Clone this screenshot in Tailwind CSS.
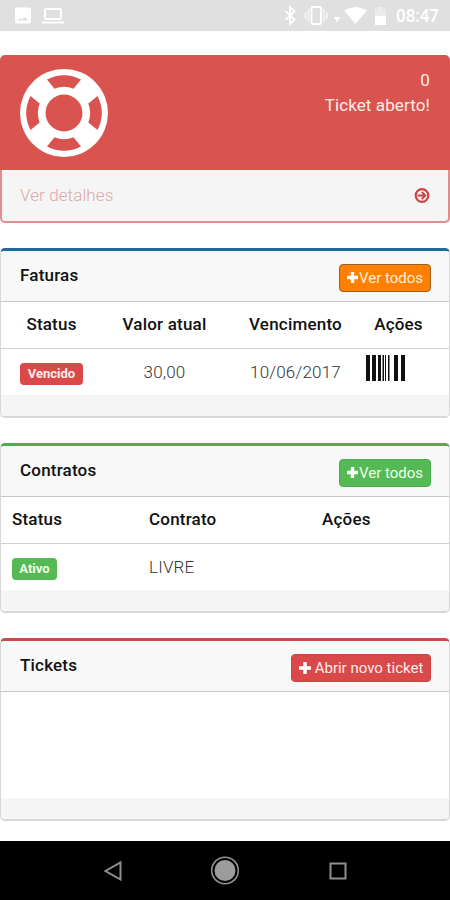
<!DOCTYPE html>
<html lang="pt-BR">
<head>
<meta charset="utf-8">
<title>Painel</title>
<script src="https://cdn.jsdelivr.net/npm/@tailwindcss/browser@4"></script>
</head>
<body class="w-[450px] h-[900px] overflow-hidden bg-white flex flex-col font-['Roboto',sans-serif] text-[17px] leading-[24px] tracking-[0.2px] text-[#111]">
<header class="h-[31px] shrink-0 bg-[#e0e0e0] flex items-center text-white">
  <svg class="w-[450px] h-[31px]" viewBox="0 0 450 31" fill="none">
    <rect x="15" y="7.500" width="16" height="16" rx="1.500" fill="#fff"/>
    <path d="M17.500 20.500l2.500-2.500 2 1.500 2.500-2.500 4 3.500z" fill="#e0e0e0"/>
    <rect x="45" y="9" width="16" height="10" rx="1" stroke="#fff" stroke-width="2"/>
    <path d="M42 22.500H64" stroke="#fff" stroke-width="2"/>
    <path d="M285.500 11l9 8.500-4.500 4.500V7l4.500 4.500-9 8.500" stroke="#fff" stroke-width="1.800"/>
    <rect x="311.500" y="7" width="9.500" height="17" rx="1" stroke="#fff" stroke-width="1.800"/>
    <path d="M308.500 9v13M305.500 12v7M324 9v13M327 12v7" stroke="#fff" stroke-opacity=".75" stroke-width="1.500"/>
    <path d="M334 17h6l-3 5z" fill="#fff"/>
    <path d="M344 10.500Q355 3.500 367 10.500L355.500 24z" fill="#fff"/>
    <path d="M375 9h3V7h5v2h3v7h-11z" fill="#fff" fill-opacity=".4"/>
    <rect x="375" y="16" width="11" height="9" fill="#fff"/>
    <text x="396" y="22" fill="#fff" font-size="17.500" font-weight="500" textLength="43" lengthAdjust="spacingAndGlyphs" letter-spacing="0">08:47</text>
  </svg>
</header>

<main class="flex flex-col pt-[24px] gap-[25px] grow">
  <section class="h-[168px]">
    <div class="h-[115px] rounded-t-[5px] bg-[#d9534f] flex justify-between px-[20px] pt-[14px] text-[#ffece8]">
      <svg class="w-[88px] h-[88px]" viewBox="-44 -44 88 88">
        <circle r="44" fill="#fff"/>
        <g fill="#d9534f">
          <path d="M-17-33.500A37.500 37.500 0 0 1 17-33.500L9.500-24.300A26 26 0 0 0-9.500-24.300Z"/>
          <path transform="rotate(90)" d="M-17-33.500A37.500 37.500 0 0 1 17-33.500L9.500-24.300A26 26 0 0 0-9.500-24.300Z"/>
          <path transform="rotate(180)" d="M-17-33.500A37.500 37.500 0 0 1 17-33.500L9.500-24.300A26 26 0 0 0-9.500-24.300Z"/>
          <path transform="rotate(270)" d="M-17-33.500A37.500 37.500 0 0 1 17-33.500L9.500-24.300A26 26 0 0 0-9.500-24.300Z"/>
          <circle r="18.500"/>
        </g>
      </svg>
      <div class="text-right leading-[25px] -mt-px tracking-[0.1px]"><div>0</div><div>Ticket aberto!</div></div>
    </div>
    <div class="h-[53px] bg-[#f5f5f5] rounded-b-[5px] border-2 border-t-0 border-[#dc8f8c] flex items-center justify-between px-[18px]">
      <span class="font-light text-[#dbaaa6] tracking-[0.1px] pb-px">Ver detalhes</span>
      <svg class="w-[16px] h-[16px]" viewBox="0 0 16 16" fill="none" stroke="#cb4643"><circle cx="8" cy="7.500" r="6.300" stroke-width="2.200"/><path d="M3.500 7.500H11M7.800 4L11.300 7.500l-3.500 3.500" stroke-width="2"/></svg>
    </div>
  </section>

  <section class="h-[170px] border border-b-2 border-[#d8d8d8] border-t-[3px] border-t-[#1c6c9c] rounded-[5px] overflow-hidden flex flex-col">
    <div class="h-[51px] shrink-0 bg-[#f8f8f8] border-b border-[#c8c8c8] flex items-center justify-between px-[19px]">
      <h2 class="font-medium pb-[2px]">Faturas</h2>
      <a class="h-[28px] w-[92px] mt-[3px] -mr-px rounded-[4px] border border-[#9c6325] bg-[#ff8000] text-[#fff0dc] text-[15px] tracking-[0px] flex items-center justify-center whitespace-nowrap">
        <svg class="w-[11px] h-[11px] mr-[1px] shrink-0" viewBox="0 0 11 11"><path d="M5.500 0v11M0 5.500h11" stroke="#fff" stroke-width="3.400"/></svg>Ver todos</a>
    </div>
    <div class="grow flex flex-col">
      <div class="h-[47px] border-b border-[#d0d0d0] grid grid-cols-[101px_125px_137px_85px] items-center text-center font-medium pb-[2px]">
        <span>Status</span><span>Valor atual</span><span>Vencimento</span><span class="-ml-[16px]">Ações</span>
      </div>
      <div class="h-[46px] grid grid-cols-[101px_125px_137px_85px] items-center text-center font-light text-[#333]">
        <span class="flex justify-center"><b class="w-[63px] h-[22px] mt-[4px] rounded-[4px] bg-[#d9494a] text-[#ffece8] text-[13px] leading-[22px] tracking-[0px] font-bold">Vencido</b></span>
        <span class="pb-px">30,00</span><span class="pb-px">10/06/2017</span>
        <svg class="w-[40px] h-[26px] ml-[2px] -mt-[8px]" viewBox="0 0 40 26" fill="#111"><path d="M0 0h4v26H0zM6 0h4v26H6zM12 0h3v26h-3zM16.500 0h1.500v26h-1.500zM19 0h1v26h-1zM22 0h1.500v26h-1.500zM28 0h4v26h-4zM35 0h4v26h-4z"/></svg>
      </div>
      <div class="grow bg-[#f5f5f5]"></div>
    </div>
  </section>

  <section class="h-[170px] border border-b-2 border-[#d8d8d8] border-t-[3px] border-t-[#4fab55] rounded-[5px] overflow-hidden flex flex-col">
    <div class="h-[51px] shrink-0 bg-[#f8f8f8] border-b border-[#c8c8c8] flex items-center justify-between px-[19px]">
      <h2 class="font-medium pb-[2px]">Contratos</h2>
      <a class="h-[28px] w-[92px] mt-[3px] -mr-px rounded-[4px] border border-[#4cae4c] bg-[#55b956] text-[#efffe9] text-[15px] tracking-[0px] flex items-center justify-center whitespace-nowrap">
        <svg class="w-[11px] h-[11px] mr-[1px] shrink-0" viewBox="0 0 11 11"><path d="M5.500 0v11M0 5.500h11" stroke="#fff" stroke-width="3.400"/></svg>Ver todos</a>
    </div>
    <div class="grow flex flex-col">
      <div class="h-[47px] border-b border-[#d0d0d0] grid grid-cols-[137px_173px_1fr] items-center font-medium pl-[11px] pb-[2px]">
        <span>Status</span><span>Contrato</span><span>Ações</span>
      </div>
      <div class="h-[46px] grid grid-cols-[137px_173px_1fr] items-center pl-[11px] font-light text-[#333]">
        <b class="w-[45px] h-[22px] mt-[4px] rounded-[4px] bg-[#55b956] text-[#efffe9] text-[13px] leading-[22px] tracking-[0px] font-bold text-center">Ativo</b>
        <span class="pb-px">LIVRE</span><span></span>
      </div>
      <div class="grow bg-[#f5f5f5]"></div>
    </div>
  </section>

  <section class="h-[183px] border border-b-2 border-[#d8d8d8] border-t-[3px] border-t-[#c4504c] rounded-[5px] overflow-hidden flex flex-col">
    <div class="h-[51px] shrink-0 bg-[#f8f8f8] border-b border-[#c8c8c8] flex items-center justify-between px-[19px]">
      <h2 class="font-medium pb-[2px]">Tickets</h2>
      <a class="h-[28px] w-[140px] mt-[3px] -mr-px rounded-[4px] border border-[#cf4440] bg-[#d9494a] text-[#ffece8] text-[15px] tracking-[0px] flex items-center justify-center whitespace-nowrap">
        <svg class="w-[12px] h-[12px] mr-[4px] shrink-0" viewBox="0 0 11 11"><path d="M5.500 0v11M0 5.500h11" stroke="#fff" stroke-width="3.200"/></svg>Abrir novo ticket</a>
    </div>
    <div class="grow"></div>
    <div class="h-[21px] bg-[#f5f5f5]"></div>
  </section>
</main>

<nav class="h-[59px] shrink-0 bg-black">
  <svg class="w-[450px] h-[59px]" viewBox="0 0 450 59" fill="none" stroke="#8f8f8f" stroke-width="2">
    <path d="M120.500 21.500v17L105.500 30z"/>
    <circle cx="225" cy="29.500" r="13.300" stroke-width="1.600"/><circle cx="225" cy="29.500" r="10.500" fill="#9c9c9c" stroke="none"/>
    <rect x="330.500" y="22.500" width="15" height="15"/>
  </svg>
</nav>
</body>
</html>
